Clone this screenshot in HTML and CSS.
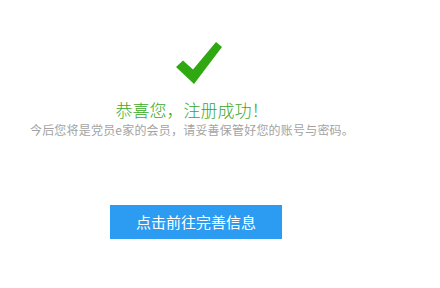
FILE: index.html
```html
<!DOCTYPE html>
<html lang="zh-CN">
<head>
	<meta charset="UTF-8">
	<meta name="viewport" content="width=device-width, initial-scale=1.0">
	<title>注册成功</title>
	<link rel="stylesheet" href="styles.css">
</head>
<body>
	<div class="result">
		<svg class="icon-ok" viewBox="0 0 46 42" width="46" height="42">
			<path d="M0 25 L7 18.5 L17 27.5 L40 0 L46 5 L18 42 Z" fill="#2fa812"/>
		</svg>
		<h2 class="tit-ok">恭喜您，注册成功！</h2>
		<p class="txt-ok">今后您将是党员e家的会员，请妥善保管好您的账号与密码。</p>
		<a href="#" class="btn-go">点击前往完善信息</a>
	</div>
</body>
</html>
```

FILE: styles.css
```css
body{margin: 0; background: #fff; font-family: "Noto Sans CJK SC", "Microsoft YaHei", sans-serif;}
.result{width: 384px; padding-top: 42px; text-align: center;}
.icon-ok{display: block; margin: 0 auto 0 176px;}
.tit-ok{
	margin: 16px 0 0; font-size: 17px; line-height: 20px; font-weight: 300; color: #38aa1d;
}
.txt-ok{
	margin: 2px 0 0; font-size: 12px; line-height: 16px; color: #a3a3a3; letter-spacing: 0.2px;
}
.btn-go{
	display: block; width: 172px; height: 34px; line-height: 34px; margin: 67px 0 0 110px;
	background: #2b9cf2; color: #fff; font-size: 15px; text-decoration: none;
}
```
